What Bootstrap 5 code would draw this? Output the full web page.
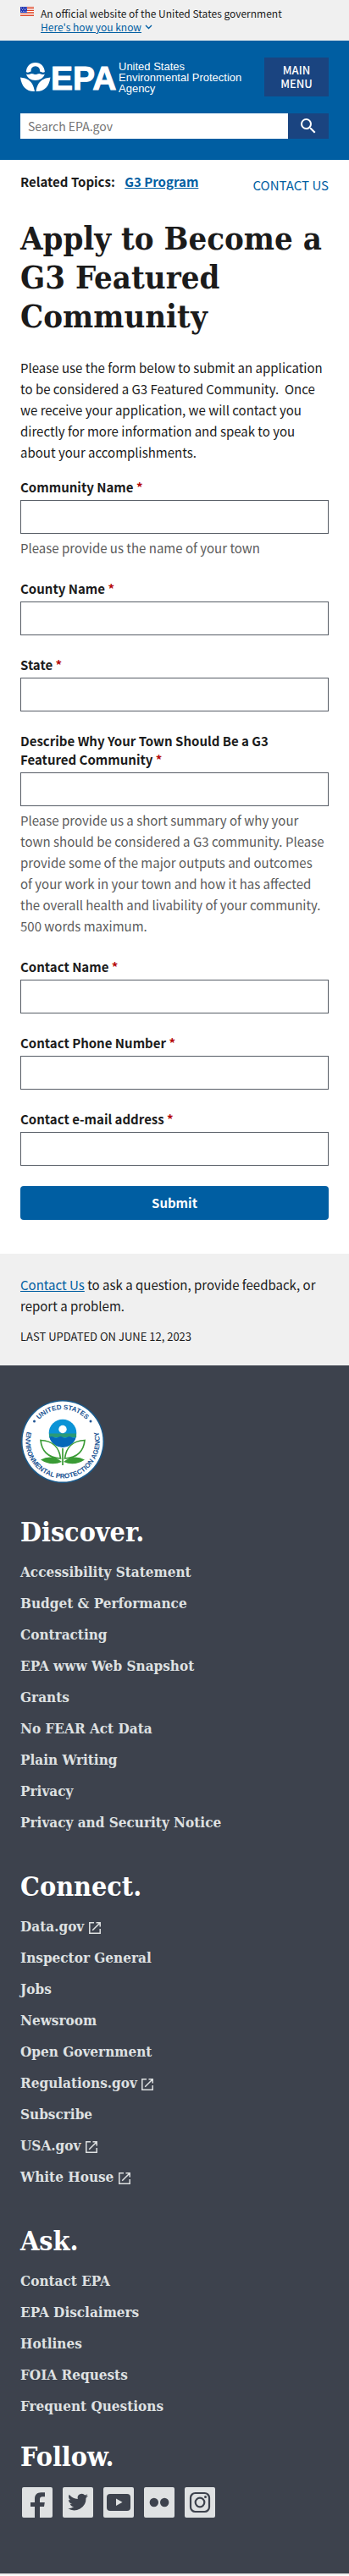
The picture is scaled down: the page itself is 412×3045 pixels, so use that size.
<!DOCTYPE html>
<html lang="en">
<head>
<meta charset="utf-8">
<meta name="viewport" content="width=device-width, initial-scale=1">
<title>Apply to Become a G3 Featured Community | US EPA</title>
<link href="https://cdn.jsdelivr.net/npm/bootstrap@5.3.0/dist/css/bootstrap.min.css" rel="stylesheet">
<style>
  :root { --epa-blue: #005ea2; --epa-navy: #1a4480; --epa-ink: #1b1b1b; --epa-slate: #3d424d; --epa-mist: #dfe1e2; --epa-gray: #f0f0f0; }
  body { font-family: "Noto Sans CJK SC", "Open Sans", sans-serif; font-size: 15px; line-height: 25px; color: var(--epa-ink); }
  a { color: var(--epa-blue); }
  .page-x { padding-left: 24px; padding-right: 24px; }
  .gov-banner { background: var(--epa-gray); font-size: 12px; line-height: 16px; padding-top: 8px; padding-bottom: 8px; }
  .gov-banner .btn { color: var(--epa-blue); font-size: 12px; line-height: 16px; }
  .site-header { background: var(--epa-blue); padding-top: 20px; padding-bottom: 25px; }
  .logo-words { font-family: "Liberation Sans", sans-serif; font-size: 13px; line-height: 13px; }
  .btn-menu { width: 76px; font-size: 13px; line-height: 16px; padding: 7px 8px; background: var(--epa-navy); color: #fff; border: 0; border-radius: 0; font-weight: 500; }
  .btn-menu:hover, .btn-find:hover { background: #162e51; color: #fff; }
  .search-row { margin-top: 20px; height: 30px; }
  .search-row input { border: 0; border-radius: 0; font-size: 14px; line-height: 20px; padding: 5px 9px; color: #1b1b1b; }
  .search-row input::placeholder { color: #757575; }
  .btn-find { width: 48px; background: var(--epa-navy); border: 0; border-radius: 0; padding: 0; }
  .topics { padding-top: 14px; line-height: 24px; }
  h1, h2, .foot-links { font-family: "DejaVu Serif Condensed", "DejaVu Serif", serif; font-weight: 700; font-stretch: condensed; }
  h1 { font-size: 38px; line-height: 46px; margin: 28px 0 25px; }
  .intro { margin-bottom: 18px; }
  .field-group { margin-bottom: 24px; }
  .field-group label { font-weight: 700; line-height: 22px; margin-bottom: 4px; display: block; }
  .field-group .form-control { height: 40px; border: 1px solid #565c65; border-radius: 0; }
  .req { color: #b50909; }
  .hint { color: #5c5c5c; margin-top: 4px; padding-bottom: 1px; }
  .btn-send { height: 40px; background: var(--epa-blue); color: #fff; font-weight: 700; font-size: 15px; line-height: 20px; border: 0; border-radius: 4px; margin-bottom: 40px; }
  .feedback { background: var(--epa-gray); padding-top: 24px; padding-bottom: 24px; }
  .updated { font-size: 13px; line-height: 20px; margin-top: 14px; }
  .site-footer { background: var(--epa-slate); padding-top: 40px; padding-bottom: 66px; border-bottom: 2px solid var(--epa-gray); }
  .site-footer h2 { color: #fff; font-size: 32px; line-height: 40px; margin: 37px 0 9px; }
  .foot-links { font-size: 17px; line-height: 37px; margin: 0; }
  .foot-links a { color: var(--epa-mist); text-decoration: none; }
  .site-footer h2.follow { margin: 21px 0 16px; }
  .social { padding-left: 2px; gap: 12px; }
  .social a { color: var(--epa-mist); line-height: 0; }
</style>
</head>
<body>
<svg width="0" height="0" class="d-none" aria-hidden="true">
  <symbol id="ext" viewBox="0 0 14 14"><path d="M6 .8H.8v12.4h12.4V8M8.5.8h4.7v4.7M13 1 4.2 9.8" fill="none" stroke="currentColor" stroke-width="1.5"/></symbol>
</svg>

<section class="gov-banner page-x d-flex align-items-start" aria-label="Official government website">
  <svg class="flex-shrink-0 me-2" width="16" height="11" viewBox="0 0 16 11" role="img" aria-label="U.S. flag">
    <path fill="#fff" d="M0 0h16v11H0z"/>
    <path stroke="#db3e1f" stroke-width="1" d="M0 .5h16M0 2.5h16M0 4.5h16M0 6.5h16M0 8.5h16M0 10.5h16"/>
    <path fill="#1e33b1" d="M0 0h8v7H0z"/>
    <path stroke="#fff" stroke-width=".8" stroke-dasharray=".8 1.2" d="M1 1.4h7M2 3.4h6M1 5.4h7"/>
  </svg>
  <div>
    <div>An official website of the United States government</div>
    <button type="button" class="btn btn-link p-0 border-0 d-flex align-items-center">Here's how you know
      <svg class="ms-1" width="9" height="6" viewBox="0 0 9 6"><path d="m1 1 3.5 3.5L8 1" fill="none" stroke="currentColor" stroke-width="1.4"/></svg>
    </button>
  </div>
</section>

<header class="site-header page-x">
  <div class="d-flex justify-content-between align-items-center">
    <a href="#" class="d-flex align-items-center text-white text-decoration-none" aria-label="EPA home">
      <svg class="overflow-visible me-1" width="112" height="36" viewBox="0 0 112 36" fill="#fff">
        <path d="M6.8 12C7.2 5.500 11.500 1 17.800 1s10.700 4.500 11.100 11q-2.100 1.300-4.200 0-.9-.5-1.700-.5a5.300 5.300 0 1 0-10.400 0q-.8 0-1.700.5-2.100 1.300-4.100 0Z"/>
        <path d="M7 14.500q2.200 1.200 4.400 0 2.200-1.200 4.300 0 2.200 1.200 4.400 0 2.200-1.200 4.300 0 2.200 1.200 4.400 0C27.800 19 23 22 17.800 22S7.900 19 7 14.500Z"/>
        <path d="M0 18.500c7.500.8 15 3.500 17 16.500C7.500 35.500 1.500 29.500 0 18.500ZM35.500 18.500c-7.500.8-15 3.500-17 16.500 9.500.5 15.500-5.500 17-16.500Z"/>
        <text x="36" y="33" font-family="Liberation Sans, sans-serif" font-weight="700" font-size="39" stroke="#fff" stroke-width="1">EPA</text>
      </svg>
      <span class="logo-words">United States<br>Environmental Protection<br>Agency</span>
    </a>
    <button type="button" class="btn btn-menu flex-shrink-0">MAIN MENU</button>
  </div>
  <form class="search-row d-flex" role="search">
    <label class="visually-hidden" for="site-search">Search EPA.gov</label>
    <input id="site-search" type="search" class="form-control flex-grow-1" placeholder="Search EPA.gov">
    <button type="submit" class="btn btn-find flex-shrink-0 d-flex align-items-center justify-content-center" aria-label="Search">
      <svg width="24" height="24" viewBox="0 0 24 24" fill="#fff"><path d="M15.500 14h-.79l-.28-.27A6.470 6.470 0 0 0 16 9.500 6.500 6.500 0 1 0 9.500 16c1.610 0 3.090-.59 4.230-1.570l.27.28v.79l5 4.990L20.490 19l-4.990-5zm-6 0C7.010 14 5 11.990 5 9.500S7.010 5 9.500 5 14 7.010 14 9.500 11.990 14 9.500 14z"/></svg>
    </button>
  </form>
</header>

<main class="page-x">
  <div class="topics d-flex justify-content-between">
    <div class="fw-bold">Related Topics: <a href="#" class="ms-2">G3 Program</a></div>
    <a href="#" class="text-decoration-none pt-1">CONTACT US</a>
  </div>
  <h1>Apply to Become a G3 Featured Community</h1>
  <p class="intro">Please use the form below to submit an application to be considered a G3 Featured Community.&nbsp; Once we receive your application, we will contact you directly for more information and speak to you about your accomplishments.</p>

  <form>
    <div class="field-group">
      <label for="community">Community Name <span class="req">*</span></label>
      <input id="community" type="text" class="form-control" aria-describedby="community-hint">
      <div id="community-hint" class="hint">Please provide us the name of your town</div>
    </div>
    <div class="field-group">
      <label for="county">County Name <span class="req">*</span></label>
      <input id="county" type="text" class="form-control">
    </div>
    <div class="field-group">
      <label for="state">State <span class="req">*</span></label>
      <input id="state" type="text" class="form-control">
    </div>
    <div class="field-group">
      <label for="why">Describe Why Your Town Should Be a G3 Featured&nbsp;Community <span class="req">*</span></label>
      <input id="why" type="text" class="form-control" aria-describedby="why-hint">
      <div id="why-hint" class="hint">Please provide us a short summary of why your town should be considered a G3 community. Please provide some of the major outputs and outcomes of&nbsp;your work in your town and how it has affected the overall health and livability of your community. 500&nbsp;words maximum.</div>
    </div>
    <div class="field-group">
      <label for="contact">Contact Name <span class="req">*</span></label>
      <input id="contact" type="text" class="form-control">
    </div>
    <div class="field-group">
      <label for="phone">Contact Phone Number <span class="req">*</span></label>
      <input id="phone" type="tel" class="form-control">
    </div>
    <div class="field-group">
      <label for="email">Contact e-mail address <span class="req">*</span></label>
      <input id="email" type="email" class="form-control">
    </div>
    <button type="submit" class="btn btn-send w-100">Submit</button>
  </form>
</main>

<section class="feedback page-x">
  <div><a href="#">Contact Us</a> to ask a question, provide feedback, or report a problem.</div>
  <div class="updated">LAST UPDATED ON JUNE 12, 2023</div>
</section>

<footer class="site-footer page-x">
  <svg class="d-block" width="100" height="100" viewBox="0 0 100 100" role="img" aria-label="EPA seal">
    <defs>
      <path id="arc-top" d="M12 50a38 38 0 0 1 76 0"/>
      <path id="arc-low" d="M11 30a43.700 43.700 0 1 0 78 0"/>
    </defs>
    <circle cx="50" cy="50" r="49" fill="#1a5a8c"/>
    <circle cx="50" cy="50" r="47.500" fill="#fff"/>
    <g fill="#205493" font-family="Liberation Sans, sans-serif" font-weight="700" font-size="8">
      <text text-anchor="middle"><textPath href="#arc-top" startOffset="50%">UNITED STATES</textPath></text>
      <text text-anchor="middle"><textPath href="#arc-low" startOffset="50%">ENVIRONMENTAL PROTECTION AGENCY</textPath></text>
      <circle cx="16.500" cy="26" r="1.500"/><circle cx="83" cy="26" r="1.500"/>
    </g>
    <circle cx="50" cy="40" r="16.300" fill="#0b93d6"/>
    <path fill="#2a9a78" d="M34 40.500h32l.2 4.500H34.200Z"/>
    <path fill="#0668b9" d="M34.300 45q2.600-2 5.200 0t5.200 0 5.300 0 5.300 0 5.200 0 5.200 0A16.300 16.300 0 0 1 34.300 45Z"/>
    <circle cx="50" cy="35.500" r="4.700" fill="#fff"/>
    <g stroke="#3a9b35" stroke-width="1.700" fill="#fff">
      <path d="M47.500 70C46 57 38 49 24 48.500 25 60 32 69.500 47.500 70ZM52.500 70C54 57 62 49 76 48.500 75 60 68 69.500 52.500 70Z"/>
      <path d="M50 58v20"/>
    </g>
    <path fill="#3a9b35" d="M24 71.500q13-7 25 2.500-13 5.500-25-2.500ZM76 71.500q-13-7-25 2.500 13 5.500 25-2.500Z"/>
  </svg>

  <h2>Discover.</h2>
  <ul class="foot-links list-unstyled">
    <li><a href="#">Accessibility Statement</a></li>
    <li><a href="#">Budget &amp; Performance</a></li>
    <li><a href="#">Contracting</a></li>
    <li><a href="#">EPA www Web Snapshot</a></li>
    <li><a href="#">Grants</a></li>
    <li><a href="#">No FEAR Act Data</a></li>
    <li><a href="#">Plain Writing</a></li>
    <li><a href="#">Privacy</a></li>
    <li><a href="#">Privacy and Security Notice</a></li>
  </ul>

  <h2>Connect.</h2>
  <ul class="foot-links list-unstyled">
    <li><a href="#">Data.gov <svg width="14" height="14"><use href="#ext"/></svg></a></li>
    <li><a href="#">Inspector General</a></li>
    <li><a href="#">Jobs</a></li>
    <li><a href="#">Newsroom</a></li>
    <li><a href="#">Open Government</a></li>
    <li><a href="#">Regulations.gov <svg width="14" height="14"><use href="#ext"/></svg></a></li>
    <li><a href="#">Subscribe</a></li>
    <li><a href="#">USA.gov <svg width="14" height="14"><use href="#ext"/></svg></a></li>
    <li><a href="#">White House <svg width="14" height="14"><use href="#ext"/></svg></a></li>
  </ul>

  <h2>Ask.</h2>
  <ul class="foot-links list-unstyled">
    <li><a href="#">Contact EPA</a></li>
    <li><a href="#">EPA Disclaimers</a></li>
    <li><a href="#">Hotlines</a></li>
    <li><a href="#">FOIA Requests</a></li>
    <li><a href="#">Frequent Questions</a></li>
  </ul>

  <h2 class="follow">Follow.</h2>
  <div class="social d-flex">
    <a href="#" aria-label="Facebook"><svg width="36" height="36" viewBox="0 0 36 36" fill="currentColor"><path d="M2 0h32a2 2 0 0 1 2 2v32a2 2 0 0 1-2 2H21V23h5l.8-5H21v-3.500c0-2 1-3.200 3-3.200h3V6.300h-4.500C17.800 6.300 15 9 15 13.600V18h-5v5h5v13H2a2 2 0 0 1-2-2V2a2 2 0 0 1 2-2Z"/></svg></a>
    <a href="#" aria-label="Twitter"><svg width="36" height="36" viewBox="0 0 36 36"><rect width="36" height="36" rx="2" fill="currentColor"/><path fill="#3d424d" transform="translate(6 6.500)" d="M24 3.600a9.800 9.800 0 0 1-2.800.8 4.900 4.900 0 0 0 2.100-2.700 9.900 9.900 0 0 1-3.100 1.200 4.900 4.900 0 0 0-8.400 4.500A14 14 0 0 1 1.700 2.200a4.900 4.900 0 0 0 1.500 6.600 4.900 4.900 0 0 1-2.200-.6 4.900 4.900 0 0 0 3.900 4.900 5 5 0 0 1-2.200.1 4.900 4.900 0 0 0 4.600 3.400A9.900 9.900 0 0 1 0 18.600a14 14 0 0 0 21.500-12.400A10 10 0 0 0 24 3.600Z"/></svg></a>
    <a href="#" aria-label="YouTube"><svg width="36" height="36" viewBox="0 0 36 36"><rect width="36" height="36" rx="2" fill="currentColor"/><rect x="4" y="8" width="28" height="20" rx="4" fill="#3d424d"/><path fill="currentColor" d="m15 13.500 7.500 4.300-7.500 4.300Z"/></svg></a>
    <a href="#" aria-label="Flickr"><svg width="36" height="36" viewBox="0 0 36 36"><rect width="36" height="36" rx="2" fill="currentColor"/><circle cx="11.800" cy="18" r="5.200" fill="#3d424d"/><circle cx="24.200" cy="18" r="5.200" fill="#3d424d"/></svg></a>
    <a href="#" aria-label="Instagram"><svg width="36" height="36" viewBox="0 0 36 36"><rect width="36" height="36" rx="2" fill="currentColor"/><g fill="none" stroke="#3d424d" stroke-width="2.200"><rect x="7" y="7" width="22" height="22" rx="5.500"/><circle cx="18" cy="18" r="5.300"/></g><circle cx="24.500" cy="11.600" r="1.500" fill="#3d424d"/></svg></a>
  </div>
</footer>
<script src="https://cdn.jsdelivr.net/npm/bootstrap@5.3.0/dist/js/bootstrap.bundle.min.js"></script>
</body>
</html>
